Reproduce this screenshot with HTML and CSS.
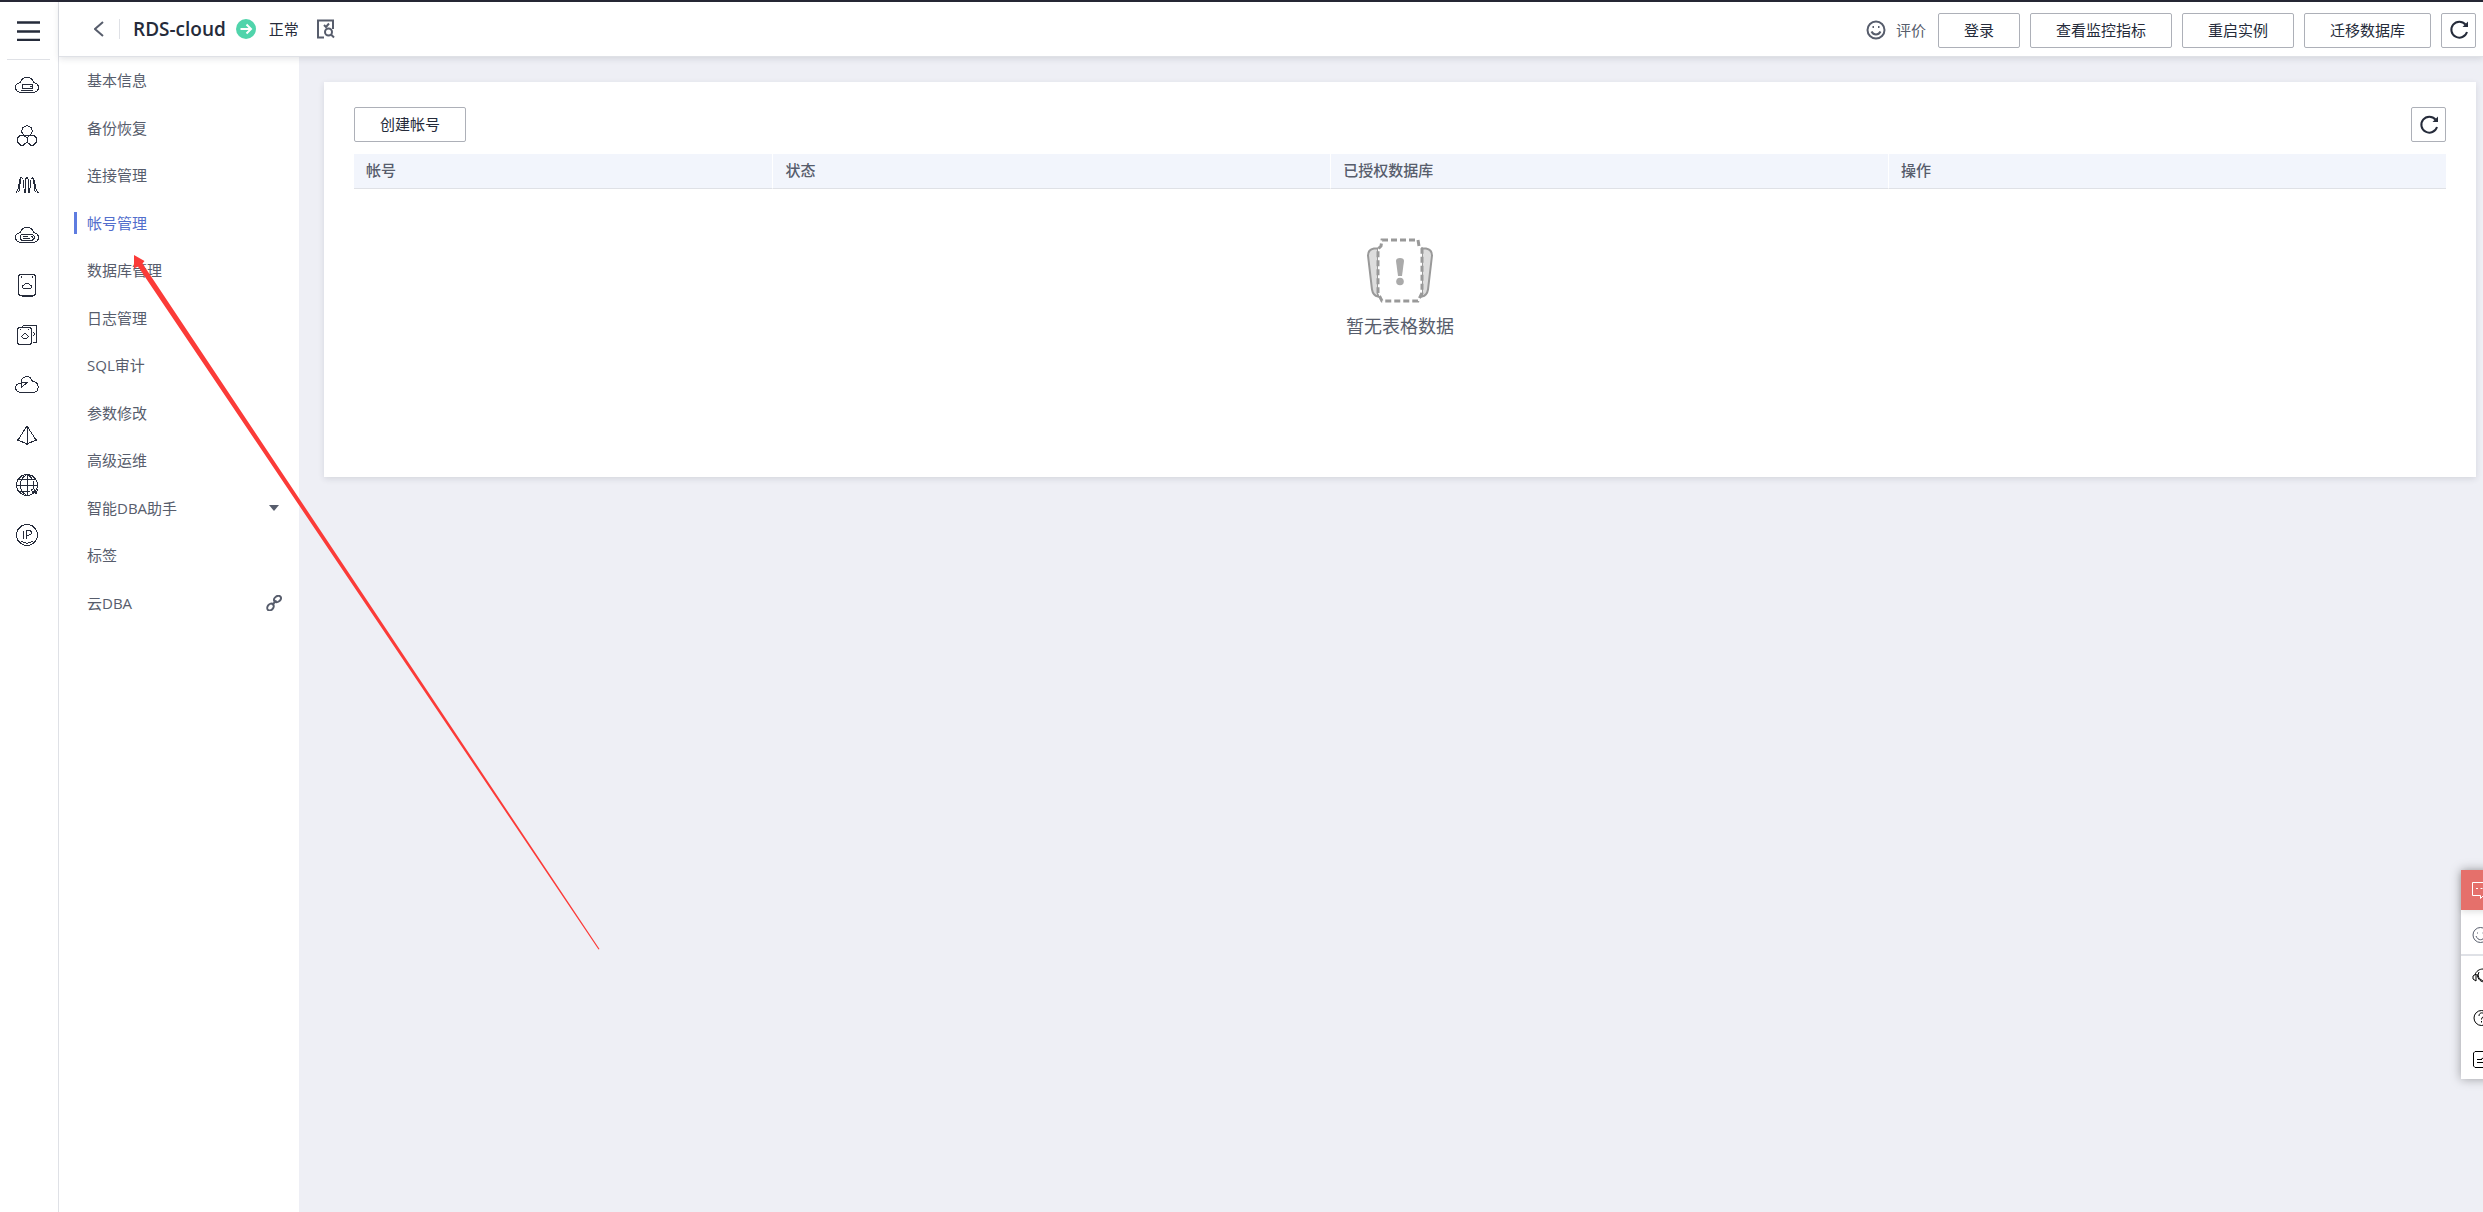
FILE: index.html
```html
<!DOCTYPE html>
<html lang="zh-CN">
<head>
    <meta charset="UTF-8">
    <meta name="viewport" content="width=device-width, initial-scale=1.0">
    <title>RDS-cloud</title>
    <link rel="stylesheet" href="styles.css">
</head>
<body>
    <div class="app">
        <nav class="rail" aria-label="服务列表">
            <button class="rail-toggle" aria-label="菜单">
                <svg width="23" height="20" viewBox="0 0 23 20"><path d="M0 1.500h23M0 10.500h23M0 19h23" stroke-width="2.6"/></svg>
            </button>
            <a href="#" class="rail-link" aria-label="云服务器">
                <svg width="24" height="24" viewBox="0 0 24 24"><path d="M5 19.500C-1 18-1 10.500 5.500 9.500 7 2.500 17 2.500 18.500 9.500 25 10.500 25 18 19 19.500zM7 11.500h10.500v3.500H7zM6 17.500h12M15 13.500h1.500"/></svg>
            </a>
            <a href="#" class="rail-link" aria-label="云容器">
                <svg width="24" height="24" viewBox="0 0 24 24"><path d="M12 2.500l4 2 1.500 4-2 3.500h-7l-2-3.500 1.500-4zM8.500 12l3.500 3v4l-3.500 3h-3l-3-3v-4l3-3zM15.500 12l-3.500 3v4l3.500 3h3l3-3v-4l-3-3z"/></svg>
            </a>
            <a href="#" class="rail-link" aria-label="弹性伸缩">
                <svg width="24" height="24" viewBox="0 0 24 24"><path d="M.5 19.500C5 19.500 3 4.500 6.500 4.500S8 19.500 10 19.500 9 4.500 12 4.500s0 15 2 15 0-15 3.500-15S19 19.500 23.500 19.500M3.500 19.500C5.500 15 4.500 4.500 7 4.500M20.500 19.500C18.500 15 19.500 4.500 17 4.500"/></svg>
            </a>
            <a href="#" class="rail-link" aria-label="裸金属">
                <svg width="24" height="24" viewBox="0 0 24 24"><path d="M5 19.500C-1 18-1 10.500 5.500 9.500 7 2.500 17 2.500 18.500 9.500 25 10.500 25 18 19 19.500zM6.500 11.500h11l1.500 1.500v2.500l-1.500 1.500h-11L5 15.500V13zM8 13.500h5M8 15.500h7M15.500 13.500h1.500v1.500"/></svg>
            </a>
            <a href="#" class="rail-link" aria-label="云硬盘">
                <svg width="24" height="24" viewBox="0 0 24 24"><path d="M5 1.500h14l1.500 1.500v18L19 22.500H5L3.500 21V3zM6.500 23.500h11M6.500 3v2M17.500 3v2M9 15.500c-2 0-2-3.500 0-3.500 1-2 5-2 6 0 2 0 2 3.500 0 3.500z"/></svg>
            </a>
            <a href="#" class="rail-link" aria-label="云备份">
                <svg width="24" height="24" viewBox="0 0 24 24"><path d="M4 4.500h11l1.500 1.500v14L15 21.500H4L2.500 20V6zM7 4.500L8 3l13.500-.5v17l-3 .5M5.500 6v1M13.500 6v1M18.500 9l1 2-1 2M8 15c-1.500-.5-1.500-2.500 0-3 1-1.500 3-1.500 4 0 1.500.5 1.500 2.500 0 3z"/></svg>
            </a>
            <a href="#" class="rail-link" aria-label="对象存储">
                <svg width="24" height="24" viewBox="0 0 24 24"><path d="M5 19.500C-1 18-1 11 6 10 6 3 15 1 17.500 8.500 25 9 25 19 18 19.500zM6.500 7.500v7l6-5.500H7"/></svg>
            </a>
            <a href="#" class="rail-link" aria-label="虚拟私有云">
                <svg width="24" height="24" viewBox="0 0 24 24"><path d="M12 3L3 17l9 4 9-4zM12 3v18M11 3h2M2.500 16v2M21.500 16v2M11 21.500h2"/></svg>
            </a>
            <a href="#" class="rail-link" aria-label="云解析">
                <svg width="24" height="24" viewBox="0 0 24 24"><circle cx="12" cy="12" r="10.500"/><path d="M12 1.500v21M1.500 12h21M3.500 6h17M3.500 18H15M12 1.500C3 6 3 18 12 22.500M12 1.500c7 3.500 8 10 5.500 16M16.500 16l1.500 5 1.500-4 1.500 4 1.500-5"/></svg>
            </a>
            <a href="#" class="rail-link" aria-label="弹性公网IP">
                <svg width="24" height="24" viewBox="0 0 24 24"><circle cx="12" cy="12" r="10.500"/><path d="M8.500 7.500v8M11.500 15.500v-8H14c3 0 3 4.500 0 4.500h-2.500M6 18c4 3 8 3 12 0"/></svg>
            </a>
        </nav>

        <div class="workspace">
            <header class="header">
                <button class="back" aria-label="返回">
                    <svg width="10" height="16" viewBox="0 0 10 16"><path d="M9 1L1 8l8 7"/></svg>
                </button>
                <h1 class="title">RDS-cloud</h1>
                <svg class="status-icon" width="20" height="20" viewBox="0 0 20 20"><circle cx="10" cy="10" r="10"/><path d="M4.500 10h10M10.500 5.500L15 10l-4.500 4.500"/></svg>
                <span class="status">正常</span>
                <button class="inspect" aria-label="诊断">
                    <svg width="18" height="20" viewBox="0 0 18 20"><path d="M7 18.500H1v-17h15V10M7 6l2 2 3-3.500"/><circle cx="11.500" cy="13" r="3.500"/><path d="M14 15.500l3 3"/></svg>
                </button>
                <div class="actions">
                    <button class="rate">
                        <svg width="20" height="20" viewBox="0 0 20 20"><circle cx="10" cy="10" r="8.500"/><path d="M6.500 7h1.500M12 7h1.500M5.500 11.500c2 4 7 4 9 0"/></svg>
                        <span>评价</span>
                    </button>
                    <button class="btn">登录</button>
                    <button class="btn">查看监控指标</button>
                    <button class="btn">重启实例</button>
                    <button class="btn">迁移数据库</button>
                    <button class="btn btn-icon" aria-label="刷新">
                        <svg width="20" height="20" viewBox="0 0 20 20"><path d="M18 12a8 8 0 1 1-1.500-7.500"/><path class="fill" d="M19 1.500v5.500h-5.500z"/></svg>
                    </button>
                </div>
            </header>

            <div class="body">
                <nav class="menu" aria-label="实例管理">
                    <a href="#">基本信息</a>
                    <a href="#">备份恢复</a>
                    <a href="#">连接管理</a>
                    <a href="#" class="active">帐号管理</a>
                    <a href="#">数据库管理</a>
                    <a href="#">日志管理</a>
                    <a href="#">SQL审计</a>
                    <a href="#">参数修改</a>
                    <a href="#">高级运维</a>
                    <a href="#">智能DBA助手
                        <svg class="caret" width="16" height="16" viewBox="0 0 16 16"><path d="M3 5h10l-5 6z"/></svg>
                    </a>
                    <a href="#">标签</a>
                    <a href="#">云DBA
                        <svg class="link" width="16" height="16" viewBox="0 0 16 16"><ellipse cx="11.500" cy="4" rx="3.800" ry="2.800" transform="rotate(-35 11.500 4)"/><ellipse cx="4.500" cy="12" rx="3.800" ry="2.800" transform="rotate(-50 4.500 12)"/><path d="M6 10l4.500-4.500"/></svg>
                    </a>
                </nav>

                <main class="main">
                    <section class="card">
                        <div class="toolbar">
                            <button class="btn">创建帐号</button>
                            <button class="btn btn-icon" aria-label="刷新">
                                <svg width="20" height="20" viewBox="0 0 20 20"><path d="M18 12a8 8 0 1 1-1.500-7.500"/><path class="fill" d="M19 1.500v5.500h-5.500z"/></svg>
                            </button>
                        </div>
                        <table class="table">
                            <thead>
                                <tr>
                                    <th class="col-account">帐号</th>
                                    <th>状态</th>
                                    <th>已授权数据库</th>
                                    <th>操作</th>
                                </tr>
                            </thead>
                            <tbody>
                                <tr>
                                    <td colspan="4" class="empty">
                                        <svg width="68" height="66" viewBox="0 0 68 66">
                                            <path class="side" d="M12 10.500H8q-6 1-6 7l4 34q1 6 6 7zM56 10.500h4q6 1 6 7l-4 34q-1 6-6 7z"/>
                                            <path class="sheet" d="M16 2h36l1 6 3 3v44l-4 8H16l-4-8V11l3-3z"/>
                                            <path class="mark" d="M30 23q0-3 4-3t4 3l-2 15h-4z"/>
                                            <circle class="mark" cx="34" cy="43.500" r="3.800"/>
                                        </svg>
                                        <p>暂无表格数据</p>
                                    </td>
                                </tr>
                            </tbody>
                        </table>
                    </section>
                </main>
            </div>
        </div>
    </div>

    <!-- floating service bar, partly tucked behind the window edge -->
    <aside class="service">
        <button class="service-chat" aria-label="咨询">
            <svg width="24" height="24" viewBox="0 0 24 24"><path d="M.5 4.500h21v13h-10l-3 3v-3h-8zM4 10.500h2M8.500 10.500h2M13 10.500h2"/></svg>
        </button>
        <button class="service-rate" aria-label="评价">
            <svg width="24" height="24" viewBox="0 0 24 24"><circle cx="8.500" cy="12" r="7.500"/><path d="M5 10h1M10.500 10h1M4 13c2 5 7 5 9 0"/></svg>
        </button>
        <button aria-label="客服">
            <svg width="24" height="24" viewBox="0 0 24 24"><path d="M3 10c2-8 14-8 16 0M4 9l-3 2v3l3 2zM5 9c1 6 4 8 8 8M7 7c-3 6 3 9 6 9M11 19h4"/></svg>
        </button>
        <button aria-label="帮助">
            <svg width="24" height="24" viewBox="0 0 24 24"><circle cx="9.500" cy="12" r="7.500"/><path d="M7 10c0-4 5-4 5-1 0 2-2.500 2-2.500 4.500M9.500 15v1.500"/></svg>
        </button>
        <button aria-label="建议">
            <svg width="24" height="24" viewBox="0 0 24 24"><path d="M3 4.500h15v16H3L1.500 19V6zM5 12.500h5M5 15.500h8M9 12.500l4-3"/></svg>
        </button>
    </aside>

    <svg class="pointer" width="600" height="950" viewBox="0 0 600 950"><path d="M134 255l10.500 6-2 2.500L599.500 949l-1 .5L138 266.500l-4 2z"/></svg>
</body>
</html>
```

FILE: styles.css
```css
* {
    box-sizing: border-box;
}

body {
    margin: 0;
    overflow: hidden;
    font-family: "Open Sans", "Noto Sans CJK SC", sans-serif;
    font-size: 15px;
    line-height: 1.5;
    color: #575d6c;
    background: #eeeff5;
}

a {
    color: inherit;
    text-decoration: none;
}

button {
    padding: 0;
    border: none;
    background: none;
    font: inherit;
    color: inherit;
    cursor: pointer;
}

svg {
    display: block;
    flex: none;
    fill: none;
    stroke: currentColor;
}

.app {
    display: flex;
    min-height: 100vh;
    border-top: 2px solid #262735;
}

/* icon rail */
.rail {
    display: flex;
    flex-direction: column;
    align-items: center;
    width: 59px;
    padding: 0 8px 0 7px;
    border-right: 1px solid #dfe1e6;
    background: #fff;
    color: #252b3a;
}

.rail-toggle {
    display: flex;
    align-items: center;
    justify-content: center;
    width: 100%;
    height: 58px;
    border-bottom: 1px solid #dfe1e6;
}

.rail-link {
    display: flex;
    align-items: center;
    height: 50px;
    padding-right: 4px;
}

.rail-link svg {
    shape-rendering: crispEdges;
}

.workspace {
    flex: 1;
    display: flex;
    flex-direction: column;
}

.header {
    display: flex;
    align-items: center;
    height: 55px;
    padding: 0 7px 0 35px;
    border-bottom: 1px solid #dfe1e6;
    background: #fff;
    box-shadow: 0 2px 6px rgba(37, 43, 58, 0.12);
    z-index: 1;
}

.back {
    padding: 2px 15px 2px 0;
    border-right: 1px solid #dfe1e6;
}

.back svg {
    stroke-width: 2;
}

.title {
    margin: 0 10px 0 13px;
    font-size: 19px;
    font-weight: 600;
    line-height: 24px;
    color: #252b3a;
}

.status-icon {
    fill: #50d4ab;
    stroke: #fff;
    stroke-width: 2;
}

.status-icon circle {
    stroke: none;
}

.status-icon path {
    fill: none;
}

.status {
    margin: 0 18px 0 13px;
    color: #252b3a;
}

.inspect svg {
    stroke-width: 2;
}

.actions {
    display: flex;
    align-items: center;
    gap: 10px;
    margin-left: auto;
    padding-top: 2px;
}

.rate {
    display: flex;
    align-items: center;
    gap: 10px;
    margin-right: 2px;
}

.rate svg {
    stroke-width: 2;
}

.btn {
    height: 35px;
    padding: 0 25px;
    border: 1px solid #adb0b8;
    border-radius: 2px;
    background: #fff;
    color: #252b3a;
}

.btn-icon {
    display: flex;
    align-items: center;
    justify-content: center;
    width: 35px;
    padding: 0;
}

.btn-icon svg {
    stroke-width: 2;
}

.btn-icon .fill {
    fill: currentColor;
    stroke: none;
}

.body {
    flex: 1;
    display: flex;
}

/* instance menu */
.menu {
    width: 240px;
    background: #fff;
}

.menu a {
    display: flex;
    align-items: center;
    justify-content: space-between;
    padding: 12px 17px 13px 28px;
}

.menu .link {
    stroke-width: 2;
}

.menu .caret {
    fill: currentColor;
    stroke: none;
}

.menu .active {
    position: relative;
    color: #526ecc;
}

.menu .active::before {
    content: "";
    position: absolute;
    top: 12px;
    left: 15px;
    width: 3px;
    height: 22px;
    background: #5e7ce0;
}

.main {
    flex: 1;
    padding: 25px 7px 25px 25px;
}

.card {
    padding: 25px 30px 30px;
    background: #fff;
    box-shadow: 0 2px 6px rgba(37, 43, 58, 0.12);
}

.toolbar {
    display: flex;
    justify-content: space-between;
    margin-bottom: 12px;
}

.table {
    width: 100%;
    table-layout: fixed;
    border-collapse: separate;
    border-spacing: 0;
}

.table th {
    height: 35px;
    padding: 0 12px 2px;
    border-bottom: 1px solid #dfe1e6;
    background: #f2f5fc;
    font-weight: 500;
    text-align: left;
}

.table th + th {
    border-left: 1px solid #fff;
}

.col-account {
    width: 20%;
}

.empty {
    height: 258px;
    padding: 49px 0 0;
    vertical-align: top;
    text-align: center;
    font-size: 18px;
}

.empty svg {
    margin: 0 auto;
    stroke: #999;
    stroke-width: 2;
}

.empty p {
    margin: 9px 0 0;
}

.empty .side {
    fill: #ddd;
}

.empty .sheet {
    fill: #fff;
    stroke-width: 3;
    stroke-dasharray: 6 3;
}

.empty .mark {
    fill: #aaa;
    stroke: none;
}

/* floating service bar */
.service {
    position: fixed;
    right: -24px;
    bottom: 133px;
    width: 46px;
    background: #fff;
    color: #000;
    box-shadow: 0 0 10px rgba(0, 0, 0, 0.35);
}

.service button {
    display: flex;
    align-items: center;
    width: 100%;
    height: 41px;
    padding-left: 11px;
}

.service .service-chat {
    height: 40px;
    margin-bottom: 6px;
    background: #e5706b;
    color: #fff;
    box-shadow: 0 2px 6px rgba(0, 0, 0, 0.12);
}

.service .service-rate {
    height: 40px;
    border-bottom: 2px solid #dfe1e6;
    color: #575d6c;
}

.pointer {
    position: absolute;
    top: 0;
    left: 0;
    z-index: 2;
    fill: #fb3b38;
    stroke: none;
    pointer-events: none;
}
```
